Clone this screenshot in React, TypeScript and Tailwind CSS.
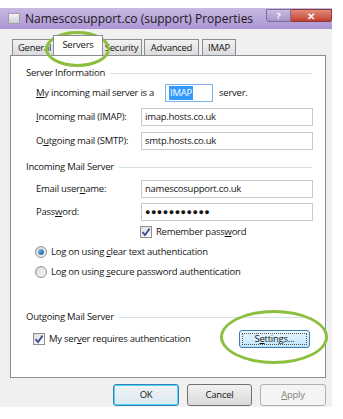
import React from "react";

const font = { fontFamily: '"Open Sans", "Liberation Sans", sans-serif' };

function Check() {
  return (
    <span className="flex h-[12px] w-[12px] items-center justify-center border border-[#8e8f8f] bg-gradient-to-br from-[#dcdcdc] to-[#ffffff]">
      <svg width="10" height="10" viewBox="0 0 10 10">
        <path d="M1.5 5.2 L4 8 L8.6 1.6" fill="none" stroke="#3b4f8a" strokeWidth="1.8" />
      </svg>
    </span>
  );
}

function Radio({ on }: { on?: boolean }) {
  return (
    <span className="flex h-[12px] w-[12px] items-center justify-center rounded-full border border-[#8e8f8f] bg-gradient-to-br from-[#d8d8d8] to-[#fafafa]">
      {on && <span className="h-[6px] w-[6px] rounded-full bg-gradient-to-br from-[#7fc4ee] to-[#1c5c9c]" />}
    </span>
  );
}

function Group({ title }: { title: string }) {
  return (
    <div className="flex h-[14px] items-center gap-[5px] pr-[13px] pl-[15px]">
      <span className="whitespace-nowrap">{title}</span>
      <span className="h-px flex-1 bg-[#d5dfe5]" />
    </div>
  );
}

function Field({ label, value, dots }: { label: React.ReactNode; value: string; dots?: boolean }) {
  return (
    <div className="flex h-[18px] items-center pl-[25px] pr-[12px]">
      <span className="w-[105px] whitespace-nowrap">{label}</span>
      <div className="flex h-[18px] flex-1 items-center border border-[#c5c9d0] bg-white px-[3px]">
        {dots ? <span className="text-[9px] tracking-[0.5px]">●●●●●●●●●●●</span> : value}
      </div>
    </div>
  );
}

const tab = "flex h-[16px] items-center justify-center border border-b-0 border-[#898c95] bg-gradient-to-b from-[#f2f2f2] to-[#dcdcdc]";

export default function App() {
  return (
    <div className="relative h-[419px] w-[343px] overflow-hidden bg-white text-[9.5px] leading-[14px] tracking-[-0.25px] text-[#151515]" style={font}>
      <div className="mt-[8px] flex h-[399px] w-[332px] flex-col">
        {/* title bar */}
        <div className="flex h-[21px] items-center bg-gradient-to-b from-[#c8b9e2] to-[#ac94d3] pl-[8px]">
          <span className="mr-[5px] h-[11px] w-[12px] border border-[#9aa0a6] bg-gradient-to-b from-[#f4f4f4] to-[#c9ccd0]" />
          <span className="text-[12px] tracking-normal text-[#1a1a1a]">Namescosupport.co (support) Properties</span>
          <div className="ml-auto flex self-start pt-[1px]">
            <span className="flex h-[13px] w-[25px] items-center justify-center rounded-bl-[3px] border border-[#7a6d94] bg-gradient-to-b from-[#c9bde0] to-[#a795c9] text-[9px] font-bold text-white">?</span>
            <span className="flex h-[13px] w-[41px] items-center justify-center rounded-br-[3px] border border-l-0 border-[#8a3a32] bg-gradient-to-b from-[#e08a7c] to-[#c4402f] text-[10px] font-bold text-white">✕</span>
          </div>
        </div>
        {/* body */}
        <div className="flex flex-1 flex-col bg-[#f0f0f0] pl-[10px] pt-[6px]">
          <div className="flex h-[20px] items-end pl-[2px]">
            <span className={`${tab} w-[43px] pl-[2px]`}>General</span>
            <span className="z-10 -mx-[2px] flex h-[20px] w-[50px] items-center justify-center border border-b-0 border-[#898c95] bg-white pb-[2px]">Servers</span>
            <span className={`${tab} w-[41px]`}>Security</span>
            <span className={`${tab} ml-[2px] w-[55px]`}>Advanced</span>
            <span className={`${tab} ml-[3px] w-[34px]`}>IMAP</span>
          </div>
          <div className="flex h-[323px] w-[316px] flex-col border border-[#898c95] bg-white pt-[10px]">
            <Group title="Server Information" />
            <div className="mt-[4px] flex h-[18px] items-center pl-[25px]">
              <span className="whitespace-nowrap"><u>M</u>y incoming mail server is a</span>
              <span className="ml-[11px] flex h-[18px] w-[48px] items-center border border-[#7eb4ea] bg-white px-[3px]">
                <span className="bg-[#3399ff] px-[1px] text-white">IMAP</span>
              </span>
              <span className="ml-[6px]">server.</span>
            </div>
            <div className="mt-[6px]"><Field label={<><u>I</u>ncoming mail (IMAP):</>} value="imap.hosts.co.uk" /></div>
            <div className="mt-[6px]"><Field label={<>O<u>u</u>tgoing mail (SMTP):</>} value="smtp.hosts.co.uk" /></div>
            <div className="mt-[10px]"><Group title="Incoming Mail Server" /></div>
            <div className="mt-[6px]"><Field label={<>Email user<u>n</u>ame:</>} value="namescosupport.co.uk" /></div>
            <div className="mt-[5px]"><Field label={<>Pass<u>w</u>ord:</>} value="" dots /></div>
            <div className="mt-[4px] flex h-[14px] items-center gap-[4px] pl-[129px]">
              <Check />
              <span>Remember pass<u>w</u>ord</span>
            </div>
            <div className="mt-[6px] flex h-[14px] items-center gap-[4px] pl-[24px]">
              <Radio on />
              <span>Log on using <u>c</u>lear text authentication</span>
            </div>
            <div className="mt-[6px] flex h-[14px] items-center gap-[4px] pl-[24px]">
              <Radio />
              <span>Log on using <u>s</u>ecure password authentication</span>
            </div>
            <div className="mt-[31px]"><Group title="Outgoing Mail Server" /></div>
            <div className="mt-[6px] flex h-[18px] items-center pl-[22px] pr-[15px]">
              <Check />
              <span className="ml-[4px]">My ser<u>v</u>er requires authentication</span>
              <span className="ml-auto flex h-[18px] w-[71px] items-center justify-center rounded-[3px] border border-[#3c7fb1] bg-gradient-to-b from-[#eaf6fd] to-[#bee6fd] p-[2px]">
                <span className="flex h-full w-full items-center justify-center border border-dotted border-[#555]">S<u>e</u>ttings...</span>
              </span>
            </div>
          </div>
          <div className="mt-[6px] flex w-[316px] justify-end gap-[8px]">
            <span className="flex h-[22px] w-[66px] items-center justify-center rounded-[3px] border border-[#3c7fb1] bg-gradient-to-b from-[#f2f2f2] to-[#d9e9f4] shadow-[inset_0_0_0_1px_#48d8fb]">OK</span>
            <span className="flex h-[22px] w-[65px] items-center justify-center rounded-[3px] border border-[#707070] bg-gradient-to-b from-[#f2f2f2] to-[#dadada]">Cancel</span>
            <span className="flex h-[22px] w-[66px] items-center justify-center rounded-[3px] border border-[#adb2b5] bg-[#f4f4f4] text-[#838383]"><u>A</u>pply</span>
          </div>
        </div>
      </div>
      {/* annotation ellipses */}
      <div className="absolute top-[31px] left-[45px] h-[36px] w-[65px] rounded-[50%] border-[3px] border-[#8cbf3f]" />
      <div className="absolute top-[310px] left-[220px] h-[54px] w-[108px] rounded-[50%] border-[3px] border-[#8cbf3f]" />
    </div>
  );
}
